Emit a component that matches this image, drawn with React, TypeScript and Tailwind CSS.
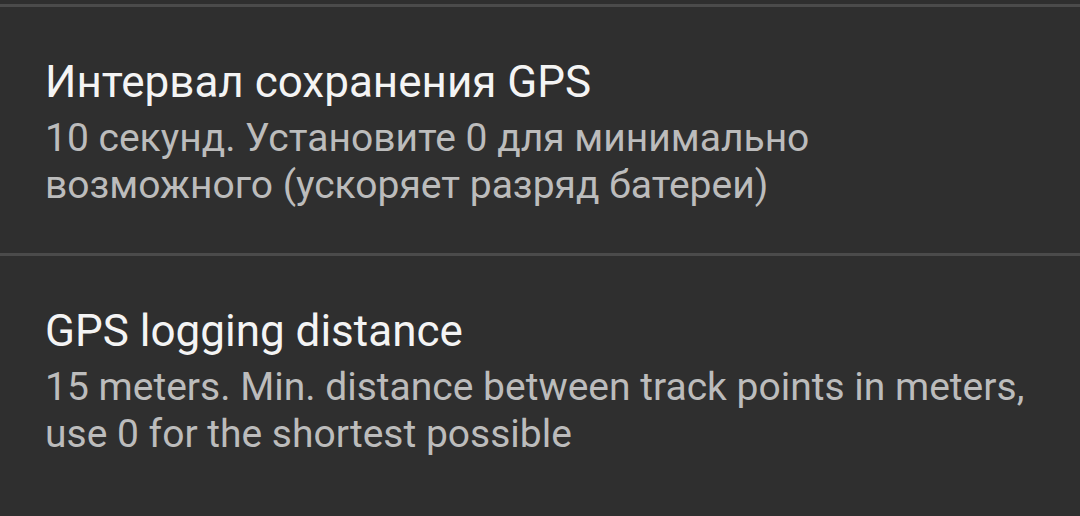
import React from 'react';

type Pref = {
  title: string;
  summary: string;
};

const prefs: Pref[] = [
  {
    title: 'Интервал сохранения GPS',
    summary: '10 секунд. Установите 0 для минимально возможного (ускоряет разряд батереи)',
  },
  {
    title: 'GPS logging distance',
    summary: '15 meters. Min. distance between track points in meters, use 0 for the shortest possible',
  },
];

const PrefRow = ({ pref, last }: { pref: Pref; last: boolean }) => (
  <div
    className={
      last
        ? 'pl-[45px] pr-[40px] pt-[51px] pb-[44px]'
        : 'border-b-[3px] border-[#4b4b4b] pl-[45px] pr-[40px] pt-[51px] pb-[44px]'
    }
  >
    <div className="text-[44px] leading-[48px] text-[#f4f4f4]">{pref.title}</div>
    <div className="mt-[9px] max-w-[1000px] text-[39px] leading-[47px] text-[#bcbcbc]">
      {pref.summary}
    </div>
  </div>
);

export default function App() {
  return (
    <div
      className="h-[516px] w-[1080px] overflow-hidden bg-[#2f2f2f]"
      style={{ fontFamily: 'Roboto, "Noto Sans", sans-serif' }}
    >
      <div className="h-[4px]" />
      <div className="border-t-[3px] border-[#4b4b4b]" />
      {prefs.map((p, i) => (
        <PrefRow key={p.title} pref={p} last={i === prefs.length - 1} />
      ))}
    </div>
  );
}
